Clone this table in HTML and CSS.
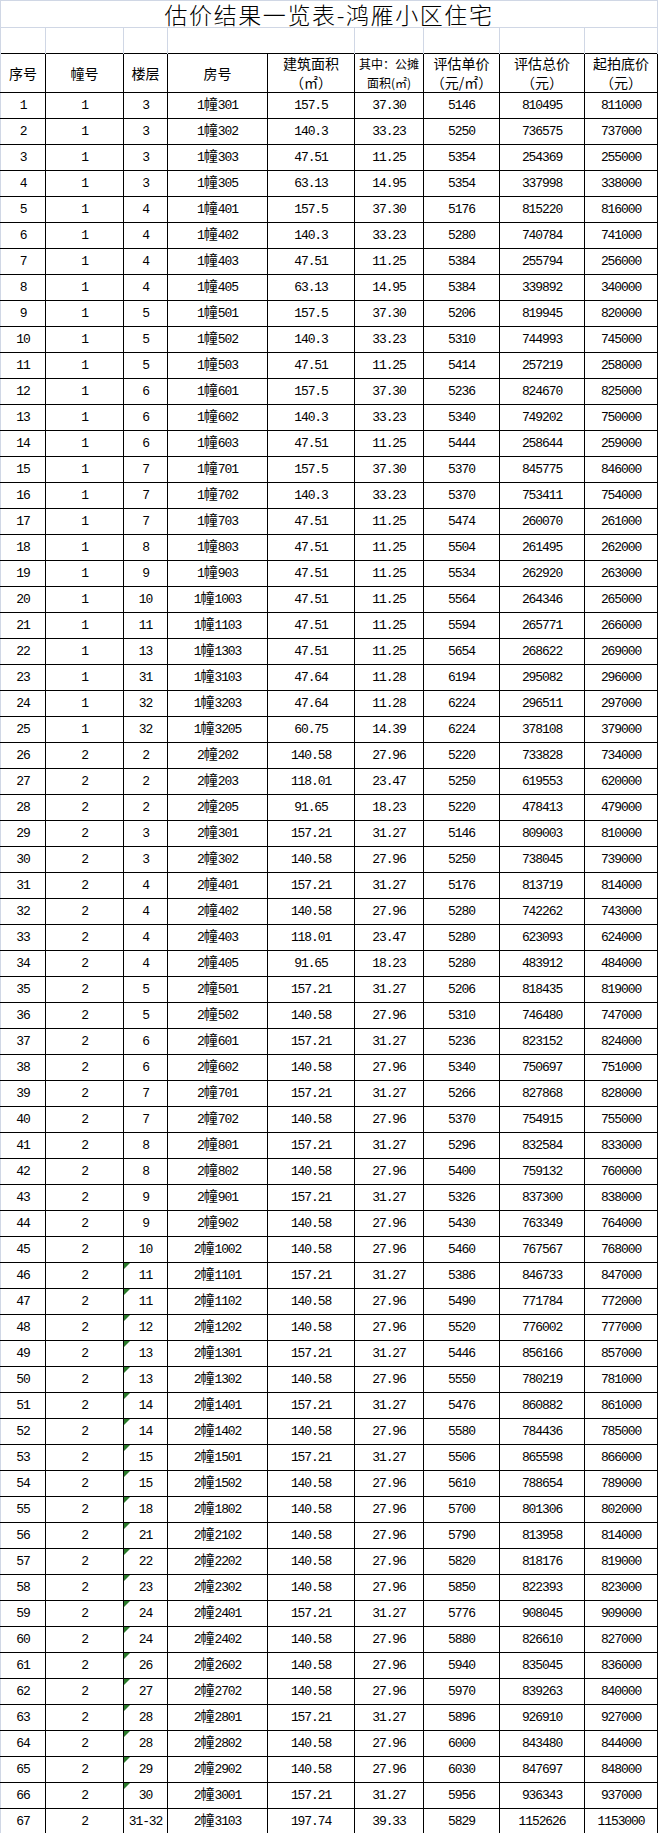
FILE: index.html
```html
<!DOCTYPE html>
<html lang="zh-CN">
<head>
<meta charset="utf-8">
<title>估价结果一览表-鸿雁小区住宅</title>
<link rel="stylesheet" href="styles.css">
</head>
<body>
<table class="sheet">
<colgroup>
<col class="c1"><col class="c2"><col class="c3"><col class="c4"><col class="c5"><col class="c6"><col class="c7"><col class="c8"><col class="c9">
</colgroup>
<tbody>
<tr class="r-title"><td colspan="9" class="title">估价结果一览表-鸿雁小区住宅</td></tr>
<tr class="r-blank"><td></td><td></td><td></td><td colspan="2"></td><td></td><td></td><td></td><td></td></tr>
<tr class="r-head">
<td class="hd">序号</td>
<td class="hd">幢号</td>
<td class="hd">楼层</td>
<td class="hd">房号</td>
<td class="hd">建筑面积<br>（㎡）</td>
<td class="hd sm">其中：公摊<br>面积(㎡)</td>
<td class="hd">评估单价<br>（元/㎡）</td>
<td class="hd">评估总价<br>（元）</td>
<td class="hd">起拍底价<br>（元）</td>
</tr>
<tr><td>1</td><td>1</td><td>3</td><td>1<span class="zh">幢</span>301</td><td>157.5</td><td>37.30</td><td>5146</td><td>810495</td><td>811000</td></tr>
<tr><td>2</td><td>1</td><td>3</td><td>1<span class="zh">幢</span>302</td><td>140.3</td><td>33.23</td><td>5250</td><td>736575</td><td>737000</td></tr>
<tr><td>3</td><td>1</td><td>3</td><td>1<span class="zh">幢</span>303</td><td>47.51</td><td>11.25</td><td>5354</td><td>254369</td><td>255000</td></tr>
<tr><td>4</td><td>1</td><td>3</td><td>1<span class="zh">幢</span>305</td><td>63.13</td><td>14.95</td><td>5354</td><td>337998</td><td>338000</td></tr>
<tr><td>5</td><td>1</td><td>4</td><td>1<span class="zh">幢</span>401</td><td>157.5</td><td>37.30</td><td>5176</td><td>815220</td><td>816000</td></tr>
<tr><td>6</td><td>1</td><td>4</td><td>1<span class="zh">幢</span>402</td><td>140.3</td><td>33.23</td><td>5280</td><td>740784</td><td>741000</td></tr>
<tr><td>7</td><td>1</td><td>4</td><td>1<span class="zh">幢</span>403</td><td>47.51</td><td>11.25</td><td>5384</td><td>255794</td><td>256000</td></tr>
<tr><td>8</td><td>1</td><td>4</td><td>1<span class="zh">幢</span>405</td><td>63.13</td><td>14.95</td><td>5384</td><td>339892</td><td>340000</td></tr>
<tr><td>9</td><td>1</td><td>5</td><td>1<span class="zh">幢</span>501</td><td>157.5</td><td>37.30</td><td>5206</td><td>819945</td><td>820000</td></tr>
<tr><td>10</td><td>1</td><td>5</td><td>1<span class="zh">幢</span>502</td><td>140.3</td><td>33.23</td><td>5310</td><td>744993</td><td>745000</td></tr>
<tr><td>11</td><td>1</td><td>5</td><td>1<span class="zh">幢</span>503</td><td>47.51</td><td>11.25</td><td>5414</td><td>257219</td><td>258000</td></tr>
<tr><td>12</td><td>1</td><td>6</td><td>1<span class="zh">幢</span>601</td><td>157.5</td><td>37.30</td><td>5236</td><td>824670</td><td>825000</td></tr>
<tr><td>13</td><td>1</td><td>6</td><td>1<span class="zh">幢</span>602</td><td>140.3</td><td>33.23</td><td>5340</td><td>749202</td><td>750000</td></tr>
<tr><td>14</td><td>1</td><td>6</td><td>1<span class="zh">幢</span>603</td><td>47.51</td><td>11.25</td><td>5444</td><td>258644</td><td>259000</td></tr>
<tr><td>15</td><td>1</td><td>7</td><td>1<span class="zh">幢</span>701</td><td>157.5</td><td>37.30</td><td>5370</td><td>845775</td><td>846000</td></tr>
<tr><td>16</td><td>1</td><td>7</td><td>1<span class="zh">幢</span>702</td><td>140.3</td><td>33.23</td><td>5370</td><td>753411</td><td>754000</td></tr>
<tr><td>17</td><td>1</td><td>7</td><td>1<span class="zh">幢</span>703</td><td>47.51</td><td>11.25</td><td>5474</td><td>260070</td><td>261000</td></tr>
<tr><td>18</td><td>1</td><td>8</td><td>1<span class="zh">幢</span>803</td><td>47.51</td><td>11.25</td><td>5504</td><td>261495</td><td>262000</td></tr>
<tr><td>19</td><td>1</td><td>9</td><td>1<span class="zh">幢</span>903</td><td>47.51</td><td>11.25</td><td>5534</td><td>262920</td><td>263000</td></tr>
<tr><td>20</td><td>1</td><td>10</td><td>1<span class="zh">幢</span>1003</td><td>47.51</td><td>11.25</td><td>5564</td><td>264346</td><td>265000</td></tr>
<tr><td>21</td><td>1</td><td>11</td><td>1<span class="zh">幢</span>1103</td><td>47.51</td><td>11.25</td><td>5594</td><td>265771</td><td>266000</td></tr>
<tr><td>22</td><td>1</td><td>13</td><td>1<span class="zh">幢</span>1303</td><td>47.51</td><td>11.25</td><td>5654</td><td>268622</td><td>269000</td></tr>
<tr><td>23</td><td>1</td><td>31</td><td>1<span class="zh">幢</span>3103</td><td>47.64</td><td>11.28</td><td>6194</td><td>295082</td><td>296000</td></tr>
<tr><td>24</td><td>1</td><td>32</td><td>1<span class="zh">幢</span>3203</td><td>47.64</td><td>11.28</td><td>6224</td><td>296511</td><td>297000</td></tr>
<tr><td>25</td><td>1</td><td>32</td><td>1<span class="zh">幢</span>3205</td><td>60.75</td><td>14.39</td><td>6224</td><td>378108</td><td>379000</td></tr>
<tr><td>26</td><td>2</td><td>2</td><td>2<span class="zh">幢</span>202</td><td>140.58</td><td>27.96</td><td>5220</td><td>733828</td><td>734000</td></tr>
<tr><td>27</td><td>2</td><td>2</td><td>2<span class="zh">幢</span>203</td><td>118.01</td><td>23.47</td><td>5250</td><td>619553</td><td>620000</td></tr>
<tr><td>28</td><td>2</td><td>2</td><td>2<span class="zh">幢</span>205</td><td>91.65</td><td>18.23</td><td>5220</td><td>478413</td><td>479000</td></tr>
<tr><td>29</td><td>2</td><td>3</td><td>2<span class="zh">幢</span>301</td><td>157.21</td><td>31.27</td><td>5146</td><td>809003</td><td>810000</td></tr>
<tr><td>30</td><td>2</td><td>3</td><td>2<span class="zh">幢</span>302</td><td>140.58</td><td>27.96</td><td>5250</td><td>738045</td><td>739000</td></tr>
<tr><td>31</td><td>2</td><td>4</td><td>2<span class="zh">幢</span>401</td><td>157.21</td><td>31.27</td><td>5176</td><td>813719</td><td>814000</td></tr>
<tr><td>32</td><td>2</td><td>4</td><td>2<span class="zh">幢</span>402</td><td>140.58</td><td>27.96</td><td>5280</td><td>742262</td><td>743000</td></tr>
<tr><td>33</td><td>2</td><td>4</td><td>2<span class="zh">幢</span>403</td><td>118.01</td><td>23.47</td><td>5280</td><td>623093</td><td>624000</td></tr>
<tr><td>34</td><td>2</td><td>4</td><td>2<span class="zh">幢</span>405</td><td>91.65</td><td>18.23</td><td>5280</td><td>483912</td><td>484000</td></tr>
<tr><td>35</td><td>2</td><td>5</td><td>2<span class="zh">幢</span>501</td><td>157.21</td><td>31.27</td><td>5206</td><td>818435</td><td>819000</td></tr>
<tr><td>36</td><td>2</td><td>5</td><td>2<span class="zh">幢</span>502</td><td>140.58</td><td>27.96</td><td>5310</td><td>746480</td><td>747000</td></tr>
<tr><td>37</td><td>2</td><td>6</td><td>2<span class="zh">幢</span>601</td><td>157.21</td><td>31.27</td><td>5236</td><td>823152</td><td>824000</td></tr>
<tr><td>38</td><td>2</td><td>6</td><td>2<span class="zh">幢</span>602</td><td>140.58</td><td>27.96</td><td>5340</td><td>750697</td><td>751000</td></tr>
<tr><td>39</td><td>2</td><td>7</td><td>2<span class="zh">幢</span>701</td><td>157.21</td><td>31.27</td><td>5266</td><td>827868</td><td>828000</td></tr>
<tr><td>40</td><td>2</td><td>7</td><td>2<span class="zh">幢</span>702</td><td>140.58</td><td>27.96</td><td>5370</td><td>754915</td><td>755000</td></tr>
<tr><td>41</td><td>2</td><td>8</td><td>2<span class="zh">幢</span>801</td><td>157.21</td><td>31.27</td><td>5296</td><td>832584</td><td>833000</td></tr>
<tr><td>42</td><td>2</td><td>8</td><td>2<span class="zh">幢</span>802</td><td>140.58</td><td>27.96</td><td>5400</td><td>759132</td><td>760000</td></tr>
<tr><td>43</td><td>2</td><td>9</td><td>2<span class="zh">幢</span>901</td><td>157.21</td><td>31.27</td><td>5326</td><td>837300</td><td>838000</td></tr>
<tr><td>44</td><td>2</td><td>9</td><td>2<span class="zh">幢</span>902</td><td>140.58</td><td>27.96</td><td>5430</td><td>763349</td><td>764000</td></tr>
<tr><td>45</td><td>2</td><td>10</td><td>2<span class="zh">幢</span>1002</td><td>140.58</td><td>27.96</td><td>5460</td><td>767567</td><td>768000</td></tr>
<tr><td>46</td><td>2</td><td class="flag">11</td><td>2<span class="zh">幢</span>1101</td><td>157.21</td><td>31.27</td><td>5386</td><td>846733</td><td>847000</td></tr>
<tr><td>47</td><td>2</td><td class="flag">11</td><td>2<span class="zh">幢</span>1102</td><td>140.58</td><td>27.96</td><td>5490</td><td>771784</td><td>772000</td></tr>
<tr><td>48</td><td>2</td><td class="flag">12</td><td>2<span class="zh">幢</span>1202</td><td>140.58</td><td>27.96</td><td>5520</td><td>776002</td><td>777000</td></tr>
<tr><td>49</td><td>2</td><td class="flag">13</td><td>2<span class="zh">幢</span>1301</td><td>157.21</td><td>31.27</td><td>5446</td><td>856166</td><td>857000</td></tr>
<tr><td>50</td><td>2</td><td class="flag">13</td><td>2<span class="zh">幢</span>1302</td><td>140.58</td><td>27.96</td><td>5550</td><td>780219</td><td>781000</td></tr>
<tr><td>51</td><td>2</td><td class="flag">14</td><td>2<span class="zh">幢</span>1401</td><td>157.21</td><td>31.27</td><td>5476</td><td>860882</td><td>861000</td></tr>
<tr><td>52</td><td>2</td><td class="flag">14</td><td>2<span class="zh">幢</span>1402</td><td>140.58</td><td>27.96</td><td>5580</td><td>784436</td><td>785000</td></tr>
<tr><td>53</td><td>2</td><td class="flag">15</td><td>2<span class="zh">幢</span>1501</td><td>157.21</td><td>31.27</td><td>5506</td><td>865598</td><td>866000</td></tr>
<tr><td>54</td><td>2</td><td class="flag">15</td><td>2<span class="zh">幢</span>1502</td><td>140.58</td><td>27.96</td><td>5610</td><td>788654</td><td>789000</td></tr>
<tr><td>55</td><td>2</td><td class="flag">18</td><td>2<span class="zh">幢</span>1802</td><td>140.58</td><td>27.96</td><td>5700</td><td>801306</td><td>802000</td></tr>
<tr><td>56</td><td>2</td><td class="flag">21</td><td>2<span class="zh">幢</span>2102</td><td>140.58</td><td>27.96</td><td>5790</td><td>813958</td><td>814000</td></tr>
<tr><td>57</td><td>2</td><td class="flag">22</td><td>2<span class="zh">幢</span>2202</td><td>140.58</td><td>27.96</td><td>5820</td><td>818176</td><td>819000</td></tr>
<tr><td>58</td><td>2</td><td class="flag">23</td><td>2<span class="zh">幢</span>2302</td><td>140.58</td><td>27.96</td><td>5850</td><td>822393</td><td>823000</td></tr>
<tr><td>59</td><td>2</td><td class="flag">24</td><td>2<span class="zh">幢</span>2401</td><td>157.21</td><td>31.27</td><td>5776</td><td>908045</td><td>909000</td></tr>
<tr><td>60</td><td>2</td><td class="flag">24</td><td>2<span class="zh">幢</span>2402</td><td>140.58</td><td>27.96</td><td>5880</td><td>826610</td><td>827000</td></tr>
<tr><td>61</td><td>2</td><td class="flag">26</td><td>2<span class="zh">幢</span>2602</td><td>140.58</td><td>27.96</td><td>5940</td><td>835045</td><td>836000</td></tr>
<tr><td>62</td><td>2</td><td class="flag">27</td><td>2<span class="zh">幢</span>2702</td><td>140.58</td><td>27.96</td><td>5970</td><td>839263</td><td>840000</td></tr>
<tr><td>63</td><td>2</td><td class="flag">28</td><td>2<span class="zh">幢</span>2801</td><td>157.21</td><td>31.27</td><td>5896</td><td>926910</td><td>927000</td></tr>
<tr><td>64</td><td>2</td><td class="flag">28</td><td>2<span class="zh">幢</span>2802</td><td>140.58</td><td>27.96</td><td>6000</td><td>843480</td><td>844000</td></tr>
<tr><td>65</td><td>2</td><td class="flag">29</td><td>2<span class="zh">幢</span>2902</td><td>140.58</td><td>27.96</td><td>6030</td><td>847697</td><td>848000</td></tr>
<tr><td>66</td><td>2</td><td class="flag">30</td><td>2<span class="zh">幢</span>3001</td><td>157.21</td><td>31.27</td><td>5956</td><td>936343</td><td>937000</td></tr>
<tr><td>67</td><td>2</td><td>31-32</td><td>2<span class="zh">幢</span>3103</td><td>197.74</td><td>39.33</td><td>5829</td><td>1152626</td><td>1153000</td></tr>
</tbody>
</table>
</body>
</html>
```
FILE: styles.css
```css
html, body {
  margin: 0;
  padding: 0;
  background: #ffffff;
}

.sheet {
  border-collapse: collapse;
  table-layout: fixed;
  font-family: "Liberation Mono", "Noto Sans CJK SC", monospace;
  font-size: 13px;
  line-height: 16px;
  letter-spacing: -1.1px;
  color: #000000;
}

.c1 { width: 45px; }
.c2 { width: 78px; }
.c3 { width: 44px; }
.c4 { width: 100px; }
.c5 { width: 87px; }
.c6 { width: 69px; }
.c7 { width: 76px; }
.c8 { width: 85px; }
.c9 { width: 73px; }

.sheet td {
  padding: 0;
  text-align: center;
  vertical-align: middle;
  white-space: nowrap;
  border: 1px solid #000000;
}

.sheet tr {
  height: 26px;
}

.sheet td:first-child {
  border-left-color: #d0d7e5;
}

.zh {
  font-family: "Noto Sans CJK SC", sans-serif;
  font-size: 14px;
  line-height: 0;
  letter-spacing: 0;
}

.r-title {
  height: 30px;
}

.r-title td {
  border: 1px solid #d0d7e5;
}

.title {
  font-family: "Noto Sans CJK SC", sans-serif;
  font-weight: 300;
  font-size: 23px;
  letter-spacing: 1.6px;
  line-height: 26px;
  vertical-align: top;
  padding-top: 3px;
}

.r-blank {
  height: 19px;
}

.r-blank td {
  border-top-color: #d0d7e5;
  border-left-color: #d0d7e5;
  border-right-color: #d0d7e5;
  border-bottom-style: none;
}

.r-head {
  height: 41px;
}

.hd {
  font-family: "Noto Sans CJK SC", sans-serif;
  font-size: 14px;
  line-height: 19px;
  letter-spacing: 0;
}

.hd.sm {
  font-size: 12px;
}

.flag {
  position: relative;
}

.flag::before {
  content: "";
  position: absolute;
  left: 0;
  top: 0;
  border-style: solid;
  border-width: 6px 6px 0 0;
  border-color: #2a7a2a transparent transparent transparent;
}
```
